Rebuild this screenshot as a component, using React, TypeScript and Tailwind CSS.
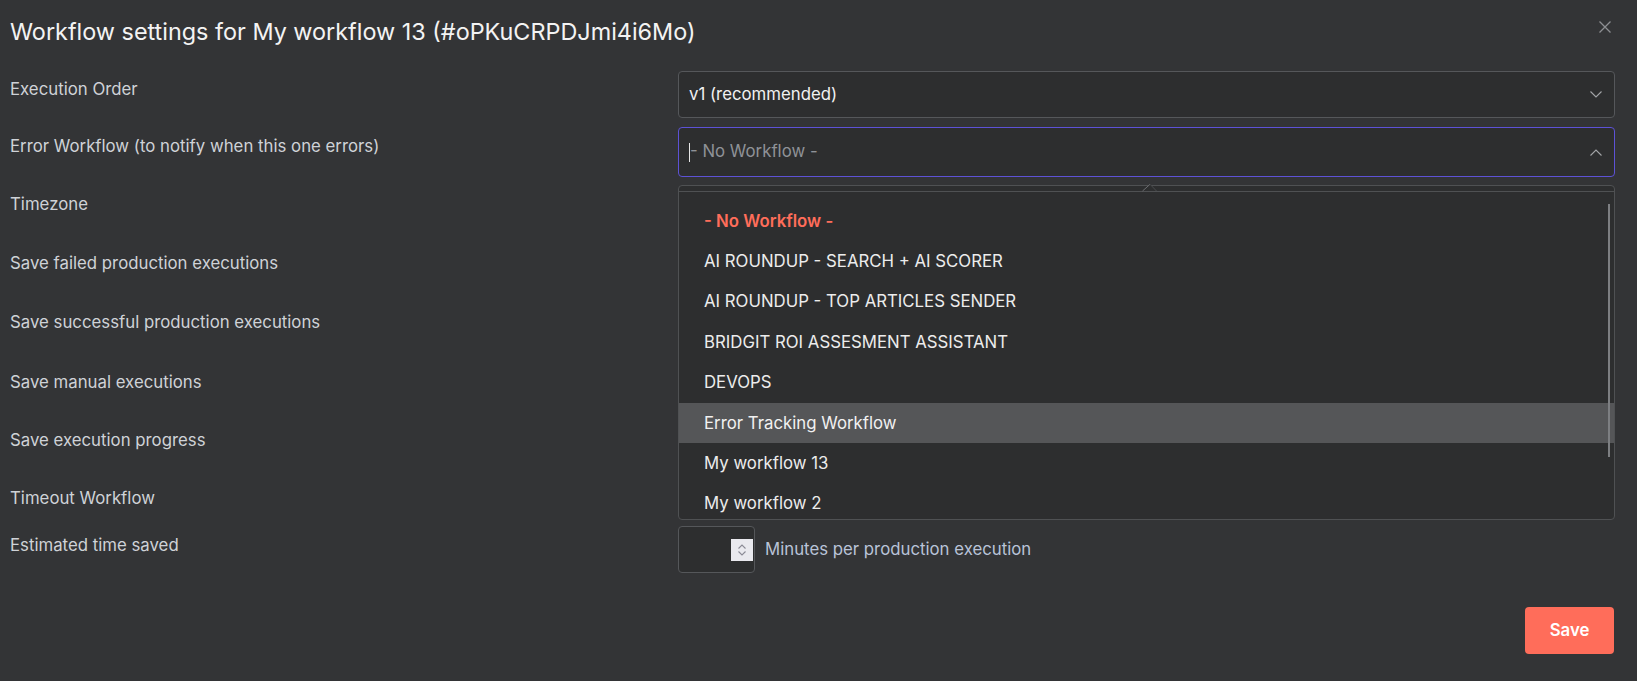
import React from "react";

const labels: { text: string; h: string }[] = [
  { text: "Execution Order", h: "h-[57px]" },
  { text: "Error Workflow (to notify when this one errors)", h: "h-[58px]" },
  { text: "Timezone", h: "h-[59px]" },
  { text: "Save failed production executions", h: "h-[59px]" },
  { text: "Save successful production executions", h: "h-[60px]" },
  { text: "Save manual executions", h: "h-[58px]" },
  { text: "Save execution progress", h: "h-[58px]" },
  { text: "Timeout Workflow", h: "h-[47px]" },
];

const items = [
  "- No Workflow -",
  "AI ROUNDUP - SEARCH + AI SCORER",
  "AI ROUNDUP - TOP ARTICLES SENDER",
  "BRIDGIT ROI ASSESMENT ASSISTANT",
  "DEVOPS",
  "Error Tracking Workflow",
  "My workflow 13",
  "My workflow 2",
];

function ChevronDown() {
  return (
    <svg width="12" height="7" viewBox="0 0 12 7" fill="none">
      <path d="M0.5 0.5 L6 6 L11.5 0.5" stroke="#a3a5a8" strokeWidth="1.1" />
    </svg>
  );
}

function ChevronUp() {
  return (
    <svg width="12" height="7" viewBox="0 0 12 7" fill="none">
      <path d="M0.5 6.5 L6 1 L11.5 6.5" stroke="#a3a5a8" strokeWidth="1.1" />
    </svg>
  );
}

export default function App() {
  return (
    <div className="relative w-[1637px] h-[681px] bg-[#333436] font-['Inter','Noto_Sans',sans-serif] overflow-hidden">
      {/* header */}
      <div className="flex items-center justify-between h-[64px] pl-[10px] pr-[26px]">
        <div className="text-[23.4px] leading-[28px] text-[#f3f3f3]">
          Workflow settings for My workflow 13 (#oPKuCRPDJmi4i6Mo)
        </div>
        <svg className="-mt-[10px]" width="12" height="12" viewBox="0 0 12 12" fill="none">
          <path d="M0.5 0.5 L11.5 11.5 M11.5 0.5 L0.5 11.5" stroke="#8d8f92" strokeWidth="1.3" />
        </svg>
      </div>

      {/* rows */}
      <div className="pt-[2px] pr-[22px]">
        {labels.map((l, i) => (
          <div key={l.text} className={`flex ${l.h}`}>
            <div className="w-[678px] pl-[10px] pt-[11px] text-[16.8px] leading-[24px] text-[#cfd2d7]">
              {l.text}
            </div>
            <div className="flex-1">
              {i === 0 && (
                <div className="mt-[5px] h-[47px] rounded-[4px] border border-[#55575a] bg-[#2d2e2f] flex items-center justify-between pl-[10px] pr-[12px]">
                  <span className="text-[16.8px] text-[#f1f1f1]">v1 (recommended)</span>
                  <ChevronDown />
                </div>
              )}
              {i === 1 && (
                <div className="mt-[4px] h-[50px] rounded-[4px] border border-[#5d52d6] bg-[#2d2e2f] flex items-center justify-between pl-[10px] pr-[12px]">
                  <span className="flex items-center text-[16.8px] text-[#8f9297]">
                    <span className="inline-block w-[1px] h-[19px] bg-[#e6e6e6]" />
                    - No Workflow -
                  </span>
                  <ChevronUp />
                </div>
              )}
            </div>
          </div>
        ))}
        <div className="flex h-[51px]">
          <div className="w-[678px] pl-[10px] pt-[11px] text-[16.8px] leading-[24px] text-[#cfd2d7]">
            Estimated time saved
          </div>
          <div className="flex-1 flex items-start">
            <div className="mt-[4px] w-[77px] h-[47px] rounded-[4px] border border-[#55575a] bg-[#2d2e2f] flex items-center justify-end pr-[1px]">
              <div className="w-[22px] h-[22px] bg-[#e9e9ee] flex flex-col items-center justify-center gap-[2px]">
                <svg width="8" height="5" viewBox="0 0 8 5" fill="none">
                  <path d="M0.5 4.5 L4 1 L7.5 4.5" stroke="#8a8a95" strokeWidth="1.1" />
                </svg>
                <svg width="8" height="5" viewBox="0 0 8 5" fill="none">
                  <path d="M0.5 0.5 L4 4 L7.5 0.5" stroke="#8a8a95" strokeWidth="1.1" />
                </svg>
              </div>
            </div>
            <div className="ml-[10px] mt-[15px] text-[16.8px] leading-[24px] text-[#b9c3d8]">
              Minutes per production execution
            </div>
          </div>
        </div>
        <div className="flex justify-end pt-[34px] pr-[1px]">
          <button className="w-[89px] h-[47px] rounded-[4px] bg-[#ff6d5a] text-white text-[16.8px] font-semibold">
            Save
          </button>
        </div>
      </div>

      {/* dropdown overlay */}
      <div className="absolute left-[678px] top-[185px] w-[937px] h-[335px] rounded-[4px] border border-[#4f5153] bg-[#2d2e2f] overflow-hidden">
        <div className="absolute left-0 right-0 top-[5px] h-[1px] bg-[#4f5153]" />
        <div className="absolute left-0 right-0 top-[15px]">
          {items.map((it, i) => (
            <div
              key={it}
              className={`h-[40.4px] flex items-center pl-[25px] text-[16.8px] ${
                i === 0
                  ? "text-[#ff6d5a] font-semibold"
                  : i === 5
                  ? "bg-[#555658] text-[#f1f1f1]"
                  : "text-[#ececec]"
              }`}
            >
              {it}
            </div>
          ))}
        </div>
        <div className="absolute right-[4px] top-[18px] w-[2px] h-[253px] bg-[#7d7f82]" />
      </div>
      <svg className="absolute left-[1140px] top-[183px]" width="20" height="10" viewBox="0 0 20 10">
        <polygon points="2.5,8 10,1.3 16.5,8" fill="#2d2e2f" />
        <path d="M2.5 8 L10 1.3" stroke="#6c6e71" strokeWidth="1" fill="none" />
        <path d="M10 1.3 L16.5 8" stroke="#4a4c4e" strokeWidth="1" fill="none" />
      </svg>
    </div>
  );
}
